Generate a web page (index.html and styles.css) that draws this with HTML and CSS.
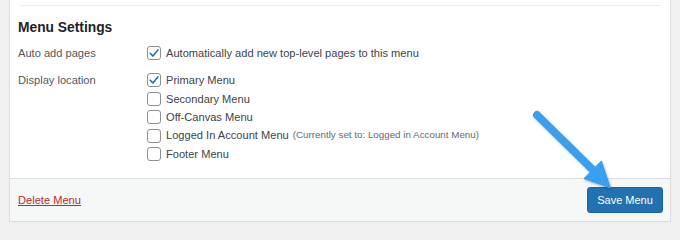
FILE: index.html
```
<!DOCTYPE html>
<html>
<head>
<meta charset="utf-8">
<link rel="stylesheet" href="styles.css">
</head>
<body>
<div class="card">
  <div class="topline"></div>
  <div class="content">
    <h3 class="title">Menu Settings</h3>
    <div class="row row-auto">
      <div class="label">Auto add pages</div>
      <div class="opts">
        <label class="opt"><span class="cb"><svg viewBox="0 0 14 14"><path d="M3.2 7.2 L5.9 9.9 L10.9 3.9"/></svg></span>Automatically add new top-level pages to this menu</label>
      </div>
    </div>
    <div class="row">
      <div class="label">Display location</div>
      <div class="opts">
        <label class="opt"><span class="cb"><svg viewBox="0 0 14 14"><path d="M3.2 7.2 L5.9 9.9 L10.9 3.9"/></svg></span>Primary Menu</label>
        <label class="opt"><span class="cb"></span>Secondary Menu</label>
        <label class="opt"><span class="cb"></span>Off-Canvas Menu</label>
        <label class="opt"><span class="cb"></span>Logged In Account Menu<span class="note">(Currently set to: Logged in Account Menu)</span></label>
        <label class="opt"><span class="cb"></span>Footer Menu</label>
      </div>
    </div>
  </div>
  <div class="footer">
    <a class="delete" href="#">Delete Menu</a>
    <button class="save">Save Menu</button>
  </div>
</div>
<svg class="arrow" width="680" height="228" viewBox="0 0 680 228">
  <defs>
    <filter id="sh" x="-20%" y="-20%" width="140%" height="140%">
      <feDropShadow dx="0.8" dy="1.2" stdDeviation="1" flood-color="#000" flood-opacity="0.28"/>
    </filter>
  </defs>
  <g filter="url(#sh)" fill="#3b9ff0" stroke="#3b9ff0">
    <line x1="537" y1="115" x2="594" y2="171" stroke-width="8" stroke-linecap="round"/>
    <polygon points="610,187.5 584.5,178.6 601.3,161.6" stroke-width="1.5" stroke-linejoin="round"/>
  </g>
</svg>
</body>
</html>
```
FILE: styles.css
```
html, body {
  margin: 0;
  padding: 0;
}
html {
  background: #f0f0f1;
}
body {
  width: 680px;
  height: 228px;
  overflow: hidden;
  position: relative;
  font-family: "Liberation Sans", Arial, sans-serif;
  font-size: 11.1px;
  color: #3c434a;
}
.card {
  margin-left: 9px;
  width: 660px;
  background: #fff;
  border: 1px solid #dcdcde;
  border-top: 0;
}
.topline {
  height: 5px;
  margin: 0 9px 0 10px;
  border-bottom: 1px solid #ececee;
}
.content {
  padding: 13px 8px 14.7px 8px;
}
.title {
  margin: 0 0 6.8px 0;
  font-size: 13.8px;
  line-height: 18px;
  font-weight: bold;
  color: #1d2327;
}
.row {
  display: flex;
}
.row-auto {
  margin-bottom: 9.1px;
}
.label {
  width: 129px;
  flex: none;
  line-height: 18.4px;
  color: #50575e;
}
.opts {
  display: flex;
  flex-direction: column;
}
.opt {
  display: flex;
  align-items: center;
  height: 18.4px;
  line-height: 18.4px;
  white-space: nowrap;
}
.cb {
  width: 12px;
  height: 12px;
  border: 1px solid #8c8f94;
  border-radius: 3px;
  background: #fff;
  margin-right: 5px;
  flex: none;
  display: flex;
  align-items: center;
  justify-content: center;
}
.cb svg {
  width: 14px;
  height: 14px;
  flex: none;
}
.cb path {
  fill: none;
  stroke: #2271b1;
  stroke-width: 1.6;
  stroke-linecap: round;
  stroke-linejoin: round;
}
.note {
  font-size: 9.8px;
  color: #646970;
  margin-left: 4px;
}
.footer {
  border-top: 1px solid #dcdcde;
  background: #f6f7f7;
  padding: 8px 7px 8px 8px;
  display: flex;
  align-items: center;
  justify-content: space-between;
}
.delete {
  color: #b32d2e;
  text-decoration: underline;
  font-size: 11.1px;
}
.save {
  width: 76px;
  height: 26px;
  background: #2271b1;
  border: 1px solid #1c66a4;
  border-radius: 3px;
  color: #fff;
  font-family: "Liberation Sans", Arial, sans-serif;
  font-size: 11px;
  padding: 0;
}
.arrow {
  position: absolute;
  left: 0;
  top: 0;
  pointer-events: none;
}
```
